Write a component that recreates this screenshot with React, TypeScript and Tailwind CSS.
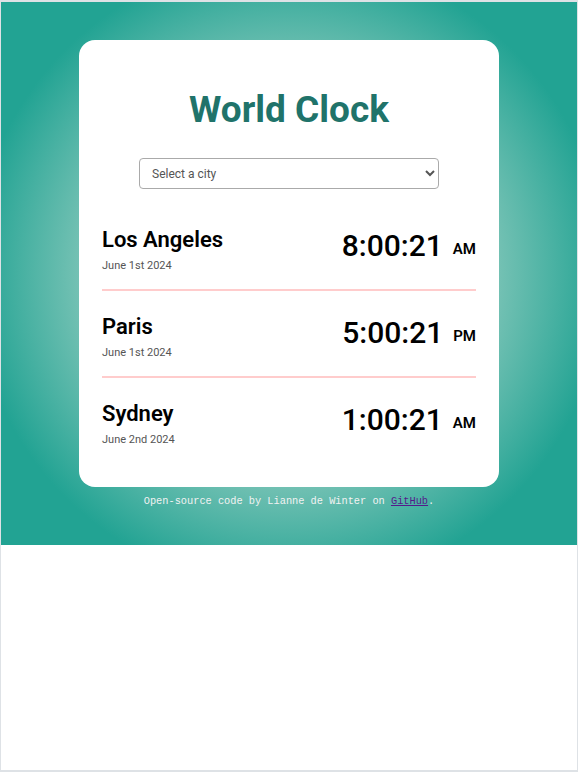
import React from "react";

const clocks = [
  { city: "Los Angeles", date: "June 1st 2024", time: "8:00:21", period: "AM" },
  { city: "Paris", date: "June 1st 2024", time: "5:00:21", period: "PM" },
  { city: "Sydney", date: "June 2nd 2024", time: "1:00:21", period: "AM" },
];

function ClockRow({ city, date, time, period, last }: (typeof clocks)[number] & { last: boolean }) {
  return (
    <div className={last ? "flex items-center justify-between pt-[23px]" : "flex items-center justify-between pt-[23px] pb-[16px] border-b-2 border-[#ffcccc]"}>
      <div className="flex flex-col">
        <span className="text-[22px] leading-[26px] font-semibold text-black">{city}</span>
        <span className="mt-[6px] text-[11px] leading-[14px] text-[#555]">{date}</span>
      </div>
      <div className="mb-[8px] flex items-center gap-[10px]">
        <span className="text-[30px] leading-[36px] font-medium text-black">{time}</span>
        <span className="mt-[5px] text-[15px] leading-[18px] font-semibold text-black">{period}</span>
      </div>
    </div>
  );
}

export default function App() {
  return (
    <div className="h-[772px] border-t-2 border-b-2 border-x border-[#dee2e6] bg-white font-['Roboto',sans-serif]">
      <div className="flex flex-col items-center pt-[38px] pb-[37px] bg-[radial-gradient(circle,#d9efea_0%,#8ccabd_45%,#22a393_80%)]">
        <div className="w-[420px] rounded-[16px] bg-white px-[23px] pb-[40px]">
          <h1 className="pt-[45px] text-center text-[37px] leading-[50px] font-bold text-[#20736a]">World Clock</h1>
          <div className="mt-[23px] mb-[15px] flex justify-center">
            <select className="h-[31px] w-[300px] rounded-[4px] border border-[#aaa] bg-white px-[8px] text-[12px] text-[#555]">
              <option>Select a city</option>
            </select>
          </div>
          {clocks.map((c, i) => (
            <ClockRow key={c.city} {...c} last={i === clocks.length - 1} />
          ))}
        </div>
        <p className="mt-[7px] text-[10.3px] leading-[14px] text-[#f2f2f2] font-['Liberation_Mono',monospace]">
          Open-source code by Lianne de Winter on{" "}
          <a href="#" className="text-[#551a8b] underline">GitHub</a>.
        </p>
      </div>
    </div>
  );
}
